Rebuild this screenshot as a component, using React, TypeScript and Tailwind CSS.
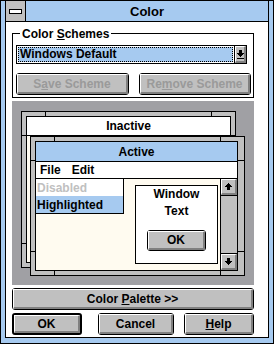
import React from "react";

type Kids = { children?: React.ReactNode; className?: string };

function PushButton({ children, className = "", isDefault = false, disabled = false }: Kids & { isDefault?: boolean; disabled?: boolean }) {
  return (
    <div className={`${className} rounded-[3px] border-black bg-[#c0c0c0] ${isDefault ? "border-2" : "border"}`}>
      <div
        className={`flex h-full items-center justify-center border-t border-l border-r-2 border-b-2 border-t-white border-l-white border-r-[#808080] border-b-[#808080] leading-none ${
          disabled ? "text-[#9a9a9a]" : "text-black"
        }`}
      >
        <span className="whitespace-pre">{children}</span>
      </div>
    </div>
  );
}

function Arrow({ dir }: { dir: "up" | "down" | "combo" }) {
  if (dir === "combo") {
    return (
      <svg width="7" height="9" viewBox="0 0 7 9" shapeRendering="crispEdges">
        <rect x="2" y="0" width="3" height="3" fill="#000" />
        <rect x="0" y="3" width="7" height="1" fill="#000" />
        <rect x="1" y="4" width="5" height="1" fill="#000" />
        <rect x="2" y="5" width="3" height="1" fill="#000" />
        <rect x="3" y="6" width="1" height="1" fill="#000" />
        <rect x="0" y="8" width="7" height="1" fill="#000" />
      </svg>
    );
  }
  const rows = [
    [3, 1],
    [2, 3],
    [1, 5],
    [0, 7],
    [2, 3],
    [2, 3],
    [2, 3],
  ];
  const list = dir === "up" ? rows : [...rows].reverse();
  return (
    <svg width="7" height="7" viewBox="0 0 7 7" shapeRendering="crispEdges">
      {list.map(([x, w], i) => (
        <rect key={i} x={x} y={i} width={w} height="1" fill="#000" />
      ))}
    </svg>
  );
}

function ArrowBox({ dir, className = "" }: { dir: "up" | "down" | "combo"; className?: string }) {
  return (
    <div className={`${className} flex items-center justify-center bg-[#c0c0c0] border-t border-l border-r-2 border-b-2 border-t-white border-l-white border-r-[#808080] border-b-[#808080]`}>
      <Arrow dir={dir} />
    </div>
  );
}

// resizable Win 3.1 frame: black / 4px grey / black, with the corner notches
function Frame({ children, className = "", wide = false }: Kids & { wide?: boolean }) {
  return (
    <div className={`${className} border border-black bg-[#c0c0c0] p-[4px] ${wide ? "pr-[6px]" : ""}`}>
      <div className="absolute left-[23px] top-0 h-[4px] w-px bg-black" />
      <div className="absolute right-[23px] top-0 h-[4px] w-px bg-black" />
      <div className="absolute bottom-0 left-[23px] h-[4px] w-px bg-black" />
      <div className="absolute bottom-0 right-[23px] h-[4px] w-px bg-black" />
      <div className="absolute left-0 top-[23px] h-px w-[4px] bg-black" />
      <div className="absolute bottom-[23px] left-0 h-px w-[4px] bg-black" />
      <div className={`absolute right-0 top-[23px] h-px bg-black ${wide ? "w-[6px]" : "w-[4px]"}`} />
      <div className={`absolute bottom-[23px] right-0 h-px bg-black ${wide ? "w-[6px]" : "w-[4px]"}`} />
      <div className="flex h-full flex-col border border-black">{children}</div>
    </div>
  );
}

export default function App() {
  return (
    <div className="h-[344px] w-[274px] border border-black bg-[#a6caf0] px-[4px] pb-[5px] font-['Liberation_Sans',Arial,sans-serif] text-[12px] font-bold text-black">
      <div className="flex h-full flex-col border-x border-b border-black bg-white">
        {/* title bar */}
        <div className="flex h-[21px] shrink-0 border-b border-black bg-[#a6caf0]">
          <div className="flex w-[20px] items-center justify-center border-r border-black bg-[#c0c0c0]">
            <div className="h-[5px] w-[13px] border border-black bg-white" />
          </div>
          <div className="flex flex-1 items-center justify-center text-[13px] leading-none">Color</div>
        </div>

        <div className="flex flex-1 flex-col pl-[6px] pr-[14px]">
          {/* Color Schemes group */}
          <div className="relative mt-[11px] h-[65px] border border-black pl-[3px] pt-[11px]">
            <div className="absolute -top-[7px] left-[7px] bg-white px-[2px] leading-[14px]">
              Color <span className="underline underline-offset-[1px]">S</span>chemes
            </div>
            <div className="flex h-[19px] w-[231px] border border-black">
              <div className="flex-1 p-[1px]">
                <div className="h-full border border-dotted border-black bg-[#a6caf0] pl-[1px] leading-[13px]">Windows Default</div>
              </div>
              <div className="w-[12px] border-l border-black">
                <ArrowBox dir="combo" className="h-full w-full" />
              </div>
            </div>
            <div className="mt-[9px] flex gap-[10px]">
              <PushButton disabled className="h-[22px] w-[113px]">
                S<span className="underline underline-offset-[1px]">a</span>ve Scheme
              </PushButton>
              <PushButton disabled className="h-[22px] w-[112px]">
                Re<span className="underline underline-offset-[1px]">m</span>ove Scheme
              </PushButton>
            </div>
          </div>

          {/* preview */}
          <div className="relative mt-[3px] h-[184px] bg-[#a0a0a4]">
            <Frame className="absolute left-[9px] top-[10px] h-[157px] w-[215px]">
              <div className="flex h-[19px] shrink-0 items-center justify-center border-b border-black bg-white leading-none">Inactive</div>
              <div className="flex-1 bg-[#fffbf0]" />
            </Frame>

            <Frame wide className="absolute left-[18px] top-[35px] h-[140px] w-[215px]">
              <div className="flex h-[20px] shrink-0 items-center justify-center border-b border-black bg-[#a6caf0] leading-none">Active</div>
              <div className="flex h-[17px] shrink-0 items-center gap-[11px] border-b border-black bg-white pl-[4px] leading-none">
                <span>File</span>
                <span>Edit</span>
              </div>
              <div className="flex flex-1 bg-[#fffbf0]">
                <div className="relative flex-1">
                  <div className="absolute left-0 top-0 w-[88px] border-b border-r border-black bg-white">
                    <div className="flex h-[17px] items-center pl-[1px] leading-none text-[#c0c0c0]">Disabled</div>
                    <div className="flex h-[17px] items-center bg-[#a6caf0] pl-[1px] leading-none">Highlighted</div>
                  </div>
                  <div className="ml-[99px] mt-[6px] flex h-[79px] w-[83px] flex-col border border-black bg-white text-center leading-[17px]">
                    <div>Window</div>
                    <div>Text</div>
                    <PushButton className="mx-auto mt-[10px] h-[21px] w-[59px]">OK</PushButton>
                  </div>
                </div>
                <div className="flex w-[17px] flex-col border-l border-black bg-[#c0c0c0]">
                  <div className="h-[17px] border-b border-black">
                    <ArrowBox dir="up" className="h-full w-full" />
                  </div>
                  <div className="flex-1" />
                  <div className="h-[17px] border-t border-black">
                    <ArrowBox dir="down" className="h-full w-full" />
                  </div>
                </div>
              </div>
            </Frame>
          </div>

          <PushButton className="mt-[3px] h-[22px] w-full">
            Color <span className="underline underline-offset-[1px]">P</span>alette &gt;&gt;
          </PushButton>

          <div className="mt-[3px] flex gap-[16px]">
            <PushButton isDefault className="h-[22px] w-[70px]">OK</PushButton>
            <PushButton className="h-[22px] w-[76px]">Cancel</PushButton>
            <PushButton className="ml-[-6px] h-[22px] w-[70px]">
              <span className="underline underline-offset-[1px]">H</span>elp
            </PushButton>
          </div>
        </div>
      </div>
    </div>
  );
}
